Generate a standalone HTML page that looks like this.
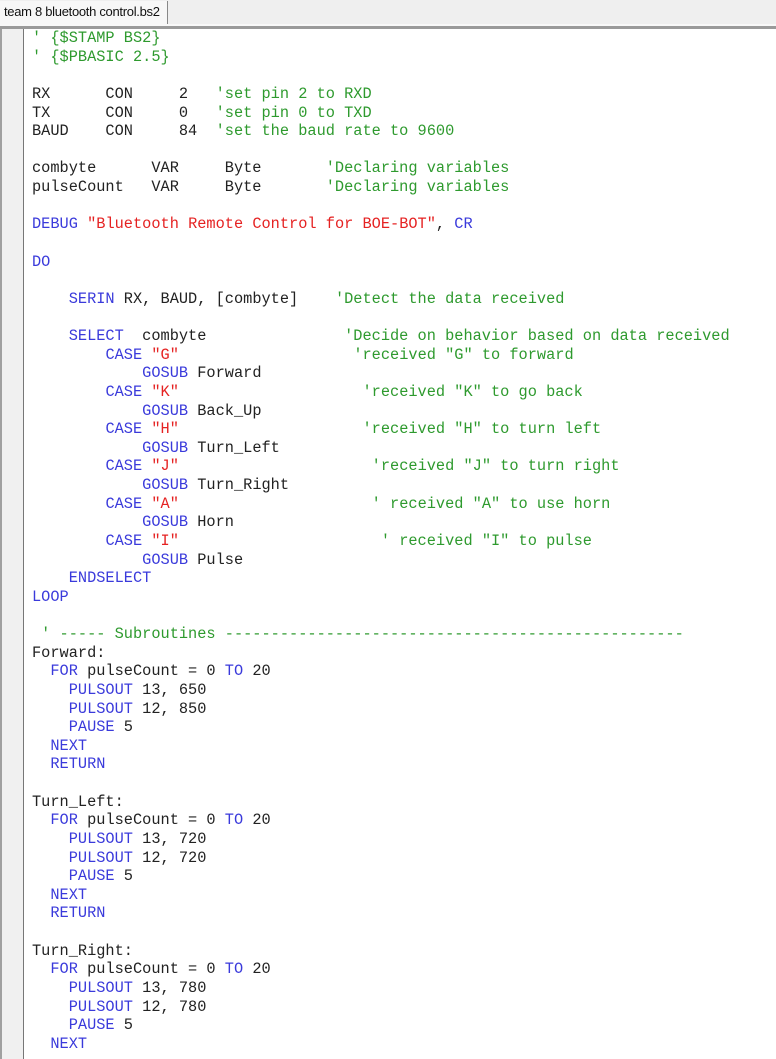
<!DOCTYPE html>
<html><head><meta charset="utf-8"><style>
html,body{margin:0;padding:0;}
body{width:776px;height:1052px;overflow:hidden;background:#fff;position:relative;font-family:"Liberation Sans",sans-serif;}
.top{position:absolute;left:0;top:0;width:776px;height:24px;background:#efefef;}
.tab{position:absolute;left:0;top:1px;width:168px;height:23px;background:#f7f7f7;border-right:1px solid #888;font-size:13px;line-height:22px;color:#111;padding-left:4px;box-sizing:border-box;letter-spacing:-0.3px;}
.line1{position:absolute;left:0;top:24px;width:776px;height:2px;background:#f8f8f8;}
.line2{position:absolute;left:0;top:26px;width:776px;height:3px;background:#9a9a9a;}
.gutter{position:absolute;left:0;top:29px;width:24px;height:1030px;background:#f0f0f0;border-left:2px solid #a0a0a0;border-right:1px solid #777;box-sizing:border-box;}
pre{position:absolute;left:32px;top:29px;margin:0;font-family:"Liberation Mono",monospace;font-size:15.3px;line-height:18.63px;color:#222;}
.c{color:#2e9a2e}.k{color:#3a3adb}.s{color:#e52222}
</style></head><body>
<div class="top"></div><div class="tab">team 8 bluetooth control.bs2</div>
<div class="line1"></div><div class="line2"></div><div class="gutter"></div>
<pre><span class="c">' {$STAMP BS2}</span>
<span class="c">' {$PBASIC 2.5}</span>

RX      CON     2   <span class="c">'set pin 2 to RXD</span>
TX      CON     0   <span class="c">'set pin 0 to TXD</span>
BAUD    CON     84  <span class="c">'set the baud rate to 9600</span>

combyte      VAR     Byte       <span class="c">'Declaring variables</span>
pulseCount   VAR     Byte       <span class="c">'Declaring variables</span>

<span class="k">DEBUG</span> <span class="s">"Bluetooth Remote Control for BOE-BOT"</span>, <span class="k">CR</span>

<span class="k">DO</span>

    <span class="k">SERIN</span> RX, BAUD, [combyte]    <span class="c">'Detect the data received</span>

    <span class="k">SELECT</span>  combyte               <span class="c">'Decide on behavior based on data received</span>
        <span class="k">CASE</span> <span class="s">"G"</span>                   <span class="c">'received "G" to forward</span>
            <span class="k">GOSUB</span> Forward
        <span class="k">CASE</span> <span class="s">"K"</span>                    <span class="c">'received "K" to go back</span>
            <span class="k">GOSUB</span> Back_Up
        <span class="k">CASE</span> <span class="s">"H"</span>                    <span class="c">'received "H" to turn left</span>
            <span class="k">GOSUB</span> Turn_Left
        <span class="k">CASE</span> <span class="s">"J"</span>                     <span class="c">'received "J" to turn right</span>
            <span class="k">GOSUB</span> Turn_Right
        <span class="k">CASE</span> <span class="s">"A"</span>                     <span class="c">' received "A" to use horn</span>
            <span class="k">GOSUB</span> Horn
        <span class="k">CASE</span> <span class="s">"I"</span>                      <span class="c">' received "I" to pulse</span>
            <span class="k">GOSUB</span> Pulse
    <span class="k">ENDSELECT</span>
<span class="k">LOOP</span>

<span class="c"> ' ----- Subroutines --------------------------------------------------</span>
Forward:
  <span class="k">FOR</span> pulseCount = 0 <span class="k">TO</span> 20
    <span class="k">PULSOUT</span> 13, 650
    <span class="k">PULSOUT</span> 12, 850
    <span class="k">PAUSE</span> 5
  <span class="k">NEXT</span>
  <span class="k">RETURN</span>

Turn_Left:
  <span class="k">FOR</span> pulseCount = 0 <span class="k">TO</span> 20
    <span class="k">PULSOUT</span> 13, 720
    <span class="k">PULSOUT</span> 12, 720
    <span class="k">PAUSE</span> 5
  <span class="k">NEXT</span>
  <span class="k">RETURN</span>

Turn_Right:
  <span class="k">FOR</span> pulseCount = 0 <span class="k">TO</span> 20
    <span class="k">PULSOUT</span> 13, 780
    <span class="k">PULSOUT</span> 12, 780
    <span class="k">PAUSE</span> 5
  <span class="k">NEXT</span>
</pre>
</body></html>
